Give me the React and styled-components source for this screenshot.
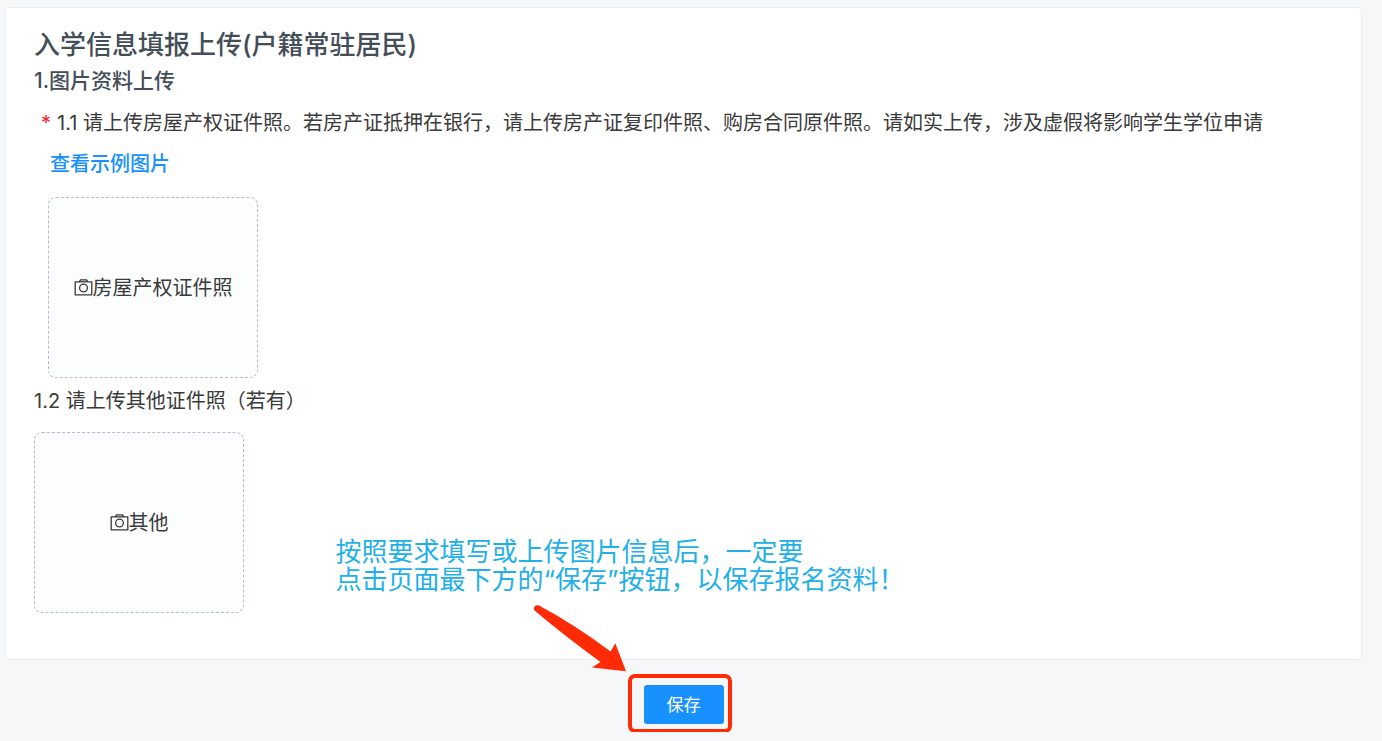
import React from 'react';
import styled, { createGlobalStyle } from 'styled-components';

const GlobalStyle = createGlobalStyle`
    * {
        box-sizing: border-box;
    }

    body {
        margin: 0;
        background: #f6f7f9;
        color: #3a3a3a;
        font-family: Inter, 'Noto Sans CJK SC', sans-serif;
        font-size: 20px;
        line-height: 36px;
    }
`;

const Page = styled.main`
    padding: 7px 20px 8px 5px;
`;

const Card = styled.section`
    padding: 19px 28px 46px;
    background: #ffffff;
    border: 1px solid #ebedf1;
    border-radius: 4px;
`;

const Title = styled.h1`
    margin: 0;
    color: #434e59;
    font-size: 26px;
    font-weight: 500;
    line-height: 36px;
`;

const Subtitle = styled.h2`
    margin: 0;
    color: #434e59;
    font-size: 21px;
    font-weight: 500;
    line-height: 36px;
`;

const RequiredItem = styled.div`
    margin-top: 6px;
    padding-left: 7px;
`;

const Item = styled.div`
    margin-top: 5px;
`;

const Question = styled.p`
    margin: 0;
`;

const Required = styled.span`
    margin-right: 6px;
    color: #f5222d;
`;

const ItemBody = styled.div`
    display: flex;
    flex-direction: column;
    align-items: flex-start;
    gap: ${(props) => props.$gap || 0}px;
    margin-top: 5px;
    padding-left: 7px;
`;

const ExampleLink = styled.a`
    padding-left: 2px;
    color: #1890ff;
    font-weight: 500;
    text-decoration: none;
`;

const Upload = styled.button`
    display: flex;
    align-items: center;
    justify-content: center;
    width: 210px;
    height: 181px;
    margin-top: ${(props) => props.$top || 0}px;
    padding: 0;
    background: #fbfdff;
    border: 1px dashed #b8bcc4;
    border-radius: 8px;
    color: #3a3a3a;
    font: inherit;
    cursor: pointer;
`;

const Footer = styled.footer`
    display: flex;
    justify-content: center;
    padding-top: 25px;
`;

const SaveArea = styled.div`
    position: relative;
`;

const SaveButton = styled.button`
    display: block;
    width: 80px;
    height: 39px;
    padding: 0;
    background: #1890ff;
    border: 0;
    border-radius: 3px;
    color: #ffffff;
    font: inherit;
    font-size: 17px;
    cursor: pointer;
`;

const Highlight = styled.div`
    position: absolute;
    inset: -11px -8px -9px -16px;
    border: 4px solid #ff2a06;
    border-radius: 7px;
    pointer-events: none;
`;

const Hint = styled.p`
    position: absolute;
    bottom: 130px;
    left: -308px;
    margin: 0;
    color: #1fb0ea;
    font-size: 26px;
    line-height: 28px;
    white-space: nowrap;
`;

const Arrow = styled.svg`
    position: absolute;
    bottom: 48px;
    left: -112px;
    pointer-events: none;
`;

const CameraIcon = () => (
    <svg width="19" height="19" viewBox="0 0 19 19" fill="none" stroke="currentColor" strokeWidth="1.3" aria-hidden="true">
        <path d="M1.2 3.8h4l1.3-2h6l1.3 2h4v13H1.2z" strokeLinejoin="round" />
        <path d="M5.6 3.8h7.8" />
        <circle cx="9.5" cy="10" r="3.9" />
    </svg>
);

export default function App() {
    return (
        <Page>
            <GlobalStyle />
            <Card>
                <Title>入学信息填报上传(户籍常驻居民)</Title>
                <Subtitle>1.图片资料上传</Subtitle>
                <RequiredItem>
                    <Question>
                        <Required>*</Required>
                        1.1 请上传房屋产权证件照。若房产证抵押在银行，请上传房产证复印件照、购房合同原件照。请如实上传，涉及虚假将影响学生学位申请
                    </Question>
                    <ItemBody $gap={15}>
                        <ExampleLink href="#example">查看示例图片</ExampleLink>
                        <Upload type="button">
                            <CameraIcon />
                            房屋产权证件照
                        </Upload>
                    </ItemBody>
                </RequiredItem>
                <Item>
                    <Question>1.2 请上传其他证件照（若有）</Question>
                    <Upload type="button" $top={13}>
                        <CameraIcon />
                        其他
                    </Upload>
                </Item>
            </Card>
            <Footer>
                <SaveArea>
                    <SaveButton type="button">保存</SaveButton>
                    <Highlight />
                    <Hint>
                        按照要求填写或上传图片信息后，一定要
                        <br />
                        点击页面最下方的“保存”按钮，以保存报名资料！
                    </Hint>
                    <Arrow width="100" height="72" viewBox="0 0 100 72" aria-hidden="true">
                        <path
                            d="M7.500 1.800Q44 21.500 78.500 47.500L83.300 39.300 94 67.300 60 63.500 68.500 58Q34 33 2.500 6.500C0.500 3 4-0.200 7.500 1.800z"
                            fill="#ff2a06"
                        />
                    </Arrow>
                </SaveArea>
            </Footer>
        </Page>
    );
}
